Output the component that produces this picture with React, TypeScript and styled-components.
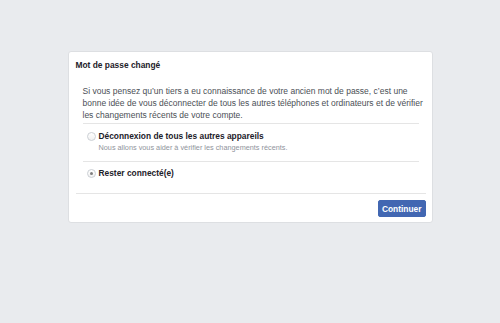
import React, { useState } from "react";
import styled, { createGlobalStyle } from "styled-components";

const GlobalStyle = createGlobalStyle`
  html, body {
    margin: 0;
    padding: 0;
    background: #e9ebee;
    font-family: "Liberation Sans", Arial, Helvetica, sans-serif;
  }
`;

const Page = styled.div`
  display: flex;
  justify-content: center;
  align-items: flex-start;
  padding-top: 51px;
  min-height: 323px;
  box-sizing: border-box;
`;

const Card = styled.div`
  width: 365px;
  box-sizing: border-box;
  background: #fff;
  border: 1px solid #dddfe2;
  border-radius: 3px;
`;

const Header = styled.div`
  padding: 7px 7px 0;
  font-size: 8.4px;
  line-height: 12px;
  font-weight: bold;
  color: #1d2129;
`;

const Body = styled.div`
  padding: 14px 13px 0 14px;
`;

const Intro = styled.p`
  margin: 0 -6px 2px 0;
  font-size: 8.5px;
  line-height: 12px;
  color: #4b4f56;
`;

const Option = styled.label<{ $last?: boolean }>`
  display: flex;
  align-items: flex-start;
  gap: 3px;
  padding: ${(p) => (p.$last ? "5px 0 14px 4px" : "6px 0 7px 4px")};
  border-top: 1px solid #e5e5e5;
  cursor: pointer;
`;

const Radio = styled.span<{ $checked: boolean }>`
  flex: none;
  width: 7px;
  height: 7px;
  margin-top: 2px;
  border-radius: 50%;
  border: 1px solid #ccd0d5;
  background: linear-gradient(#fff, #f1f1f1);
  display: flex;
  align-items: center;
  justify-content: center;

  &::after {
    content: "";
    width: 3px;
    height: 3px;
    border-radius: 50%;
    background: ${(p) => (p.$checked ? "#7f7f7f" : "transparent")};
  }
`;

const OptionText = styled.div`
  display: flex;
  flex-direction: column;
`;

const OptionTitle = styled.span`
  font-size: 8.4px;
  line-height: 12px;
  font-weight: bold;
  color: #1d2129;
`;

const OptionHint = styled.span`
  font-size: 7.3px;
  line-height: 12px;
  color: #90949c;
`;

const Footer = styled.div`
  margin: 0 6px 0 7px;
  padding: 6px 0 5px;
  border-top: 1px solid #e5e5e5;
  display: flex;
  justify-content: flex-end;
`;

const Button = styled.button`
  height: 17px;
  padding: 0 3px;
  border: 1px solid #4267b2;
  border-radius: 2px;
  background: #4267b2;
  color: #fff;
  font-family: inherit;
  font-size: 8.4px;
  font-weight: bold;
  cursor: pointer;
`;

const options = [
  {
    id: "logout",
    title: "Déconnexion de tous les autres appareils",
    hint: "Nous allons vous aider à vérifier les changements récents.",
  },
  { id: "stay", title: "Rester connecté(e)" },
];

export default function App() {
  const [choice, setChoice] = useState("stay");

  return (
    <Page>
      <GlobalStyle />
      <Card>
        <Header>Mot de passe changé</Header>
        <Body>
          <Intro>
            Si vous pensez qu’un tiers a eu connaissance de votre ancien mot de
            passe, c’est une bonne idée de vous déconnecter de tous les autres
            téléphones et ordinateurs et de vérifier les changements récents de
            votre compte.
          </Intro>
          {options.map((o, i) => (
            <Option
              key={o.id}
              $last={i === options.length - 1}
              onClick={() => setChoice(o.id)}
            >
              <Radio $checked={choice === o.id} />
              <OptionText>
                <OptionTitle>{o.title}</OptionTitle>
                {o.hint && <OptionHint>{o.hint}</OptionHint>}
              </OptionText>
            </Option>
          ))}
        </Body>
        <Footer>
          <Button>Continuer</Button>
        </Footer>
      </Card>
    </Page>
  );
}
